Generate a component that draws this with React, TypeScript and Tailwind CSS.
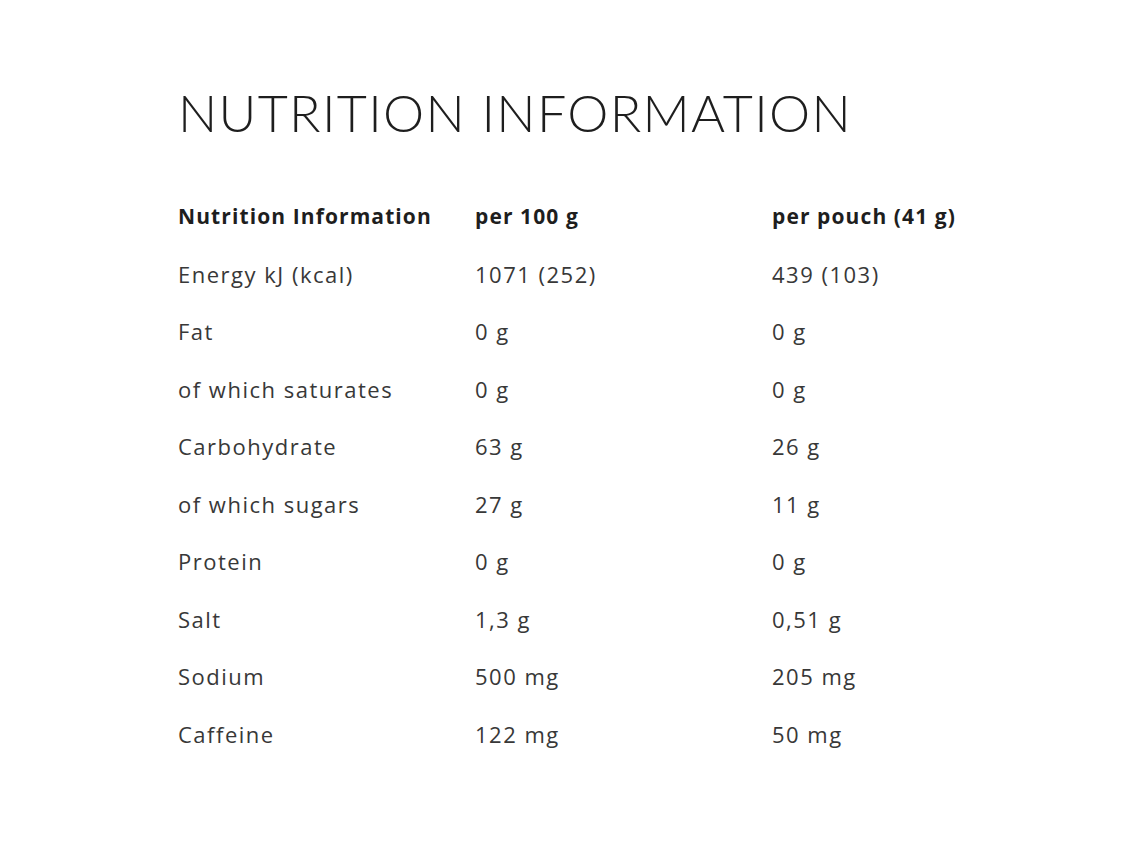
const rows: [string, string, string][] = [
  ['Energy kJ (kcal)', '1071 (252)', '439 (103)'],
  ['Fat', '0 g', '0 g'],
  ['of which saturates', '0 g', '0 g'],
  ['Carbohydrate', '63 g', '26 g'],
  ['of which sugars', '27 g', '11 g'],
  ['Protein', '0 g', '0 g'],
  ['Salt', '1,3 g', '0,51 g'],
  ['Sodium', '500 mg', '205 mg'],
  ['Caffeine', '122 mg', '50 mg'],
];

export default function App() {
  return (
    <div className="w-[1140px] h-[855px] bg-white pl-[178px] pt-[82px] text-[#383838]">
      <h1 className="font-['Lato',sans-serif] text-[52px] font-light leading-[60px] tracking-[1.3px] text-[#1e1e1e]">NUTRITION INFORMATION</h1>

      <div className="mt-[59px] grid grid-cols-[297px_297px_297px] font-['Open_Sans',sans-serif] text-[22px] leading-[30px] tracking-[1.5px]">
        <div className="h-[57.5px] text-[21px] tracking-[1.1px] font-bold text-[#1e1e1e]">Nutrition Information</div>
        <div className="h-[57.5px] text-[21px] tracking-[1.1px] font-bold text-[#1e1e1e]">per 100 g</div>
        <div className="h-[57.5px] text-[21px] tracking-[1.1px] font-bold text-[#1e1e1e]">per pouch (41 g)</div>
        {rows.map(([label, a, b]) => (
          <>
            <div key={label + '-l'} className="h-[57.5px]">{label}</div>
            <div key={label + '-a'} className="h-[57.5px]">{a}</div>
            <div key={label + '-b'} className="h-[57.5px]">{b}</div>
          </>
        ))}
      </div>
    </div>
  );
}
